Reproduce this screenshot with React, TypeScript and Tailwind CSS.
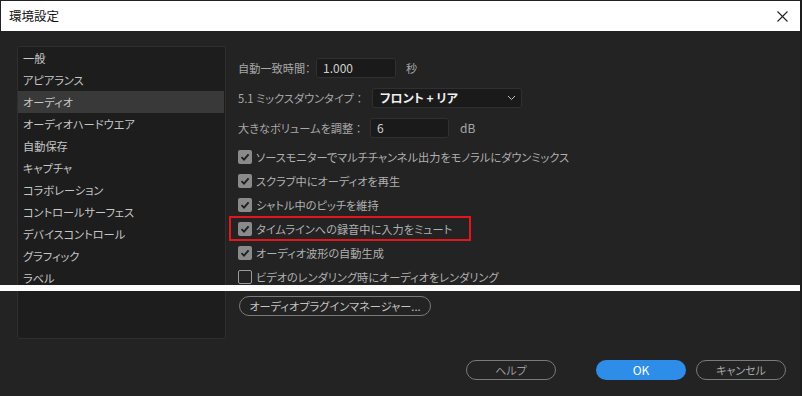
import React from "react";

const listItems = [
  "一般",
  "アピアランス",
  "オーディオ",
  "オーディオハードウエア",
  "自動保存",
  "キャプチャ",
  "コラボレーション",
  "コントロールサーフェス",
  "デバイスコントロール",
  "グラフィック",
  "ラベル",
];

const checks: { label: string; checked: boolean; highlight?: boolean }[] = [
  { label: "ソースモニターでマルチチャンネル出力をモノラルにダウンミックス", checked: true },
  { label: "スクラブ中にオーディオを再生", checked: true },
  { label: "シャトル中のピッチを維持", checked: true },
  { label: "タイムラインへの録音中に入力をミュート", checked: true, highlight: true },
  { label: "オーディオ波形の自動生成", checked: true },
  { label: "ビデオのレンダリング時にオーディオをレンダリング", checked: false },
];

function CheckBox({ checked }: { checked: boolean }) {
  if (checked) {
    return (
      <div className="w-[14px] h-[14px] rounded-[2px] bg-[#8a8a8a] flex items-center justify-center shrink-0">
        <svg width="10" height="10" viewBox="0 0 10 10">
          <path d="M1.5 5.2 L4 7.6 L8.6 2.4" fill="none" stroke="#1e1e1e" strokeWidth="1.8" />
        </svg>
      </div>
    );
  }
  return <div className="w-[14px] h-[14px] rounded-[2px] border border-[#9a9a9a] shrink-0" />;
}

export default function App() {
  return (
    <div
      className="relative w-[802px] h-[396px] bg-[#232323] overflow-hidden pt-px [font-feature-settings:'palt']"
      style={{ fontFamily: '"Noto Sans CJK JP", "Noto Sans", sans-serif' }}
    >
      {/* title bar */}
      <div className="h-[30px] ml-px mr-[2px] bg-white flex items-center justify-between pl-[8px] pr-[12px]">
        <span className="text-[12.5px] text-[#111] leading-none [font-feature-settings:normal]">環境設定</span>
        <svg width="11" height="11" viewBox="0 0 11 11">
          <path d="M0.5 0.5 L10.5 10.5 M10.5 0.5 L0.5 10.5" stroke="#222" strokeWidth="1.1" />
        </svg>
      </div>

      <div className="flex pt-[15px] pl-[17px]">
        {/* left list */}
        <div className="w-[209px] h-[293px] bg-[#1d1d1d] border border-[#2f2f2f] rounded-[3px] flex flex-col">
          {listItems.map((it, i) => (
            <div
              key={it}
              className={
                "h-[22px] shrink-0 flex items-center pl-[5px] text-[11.2px] text-[#c6c6c6] whitespace-nowrap " +
                (i === 2 ? "bg-[#393939] mr-px" : "")
              }
            >
              {it}
            </div>
          ))}
        </div>

        {/* right settings */}
        <div className="flex flex-col pl-[11px] pt-[12px] text-[11.2px] text-[#a8a8a8] whitespace-nowrap">
          <div className="flex items-center h-[20px]">
            <span className="w-[79px] pl-[1px]">自動一致時間：</span>
            <div className="w-[80px] h-[20px] bg-[#1a1a1a] border border-[#303030] rounded-[3px] flex items-center pl-[6px] text-[#d0d0d0] text-[12px]">
              1.000
            </div>
            <span className="ml-[10px]">秒</span>
          </div>
          <div className="flex items-center h-[20px] mt-[10px]">
            <span className="w-[135px] pl-[1px]">5.1 ミックスダウンタイプ&nbsp;：</span>
            <div className="w-[150px] h-[20px] bg-[#1a1a1a] border border-[#303030] rounded-[3px] flex items-center justify-between pl-[7px] pr-[5px] text-[#f0f0f0] font-bold text-[12px]">
              <span>フロント&nbsp;+&nbsp;リア</span>
              <svg width="9" height="6" viewBox="0 0 9 6">
                <path d="M1 1 L4.5 4.5 L8 1" fill="none" stroke="#bdbdbd" strokeWidth="1" />
              </svg>
            </div>
          </div>
          <div className="flex items-center h-[20px] mt-[10px]">
            <span className="w-[133px] pl-[1px]">大きなボリュームを調整&nbsp;：</span>
            <div className="w-[79px] h-[20px] bg-[#1a1a1a] border border-[#303030] rounded-[3px] flex items-center pl-[6px] text-[#d0d0d0] text-[12px]">
              6
            </div>
            <span className="ml-[11px] text-[12px]">dB</span>
          </div>

          <div className="flex flex-col mt-[7px]">
            {checks.map((c) => (
              <div key={c.label} className="relative h-[24px] flex items-center gap-[4px] pl-[1px]">
                <CheckBox checked={c.checked} />
                <span className="text-[#b0b0b0]">{c.label}</span>
                {c.highlight && (
                  <div className="absolute left-[-8px] top-[-1px] w-[242px] h-[25px] border-2 border-[#e3161b]" />
                )}
              </div>
            ))}
          </div>

          <div className="mt-[7px] ml-[2px] w-[192px] h-[20px] rounded-full border border-[#7a7a7a] flex items-center justify-center text-[#c4c4c4]">
            オーディオプラグインマネージャー...
          </div>
        </div>
      </div>

      {/* bottom buttons */}
      <div className="absolute left-[466px] top-[360px] flex gap-[40px]">
        <div className="w-[90px] h-[20px] rounded-full border border-[#7a7a7a] flex items-center justify-center text-[11px] text-[#9a9a9a]">
          ヘルプ
        </div>
        <div className="flex gap-[10px]">
          <div className="w-[90px] h-[20px] rounded-full bg-[#2d8de8] flex items-center justify-center text-[12px] text-white">
            OK
          </div>
          <div className="w-[90px] h-[20px] rounded-full border border-[#7a7a7a] flex items-center justify-center text-[11px] text-[#a8a8a8]">
            キャンセル
          </div>
        </div>
      </div>

      {/* seam strip */}
      <div className="absolute left-0 top-[285px] w-[800px] h-[6px] bg-white" />
      <div className="absolute right-0 top-0 w-[2px] h-[396px] bg-[#1c1c1c]" />
    </div>
  );
}
